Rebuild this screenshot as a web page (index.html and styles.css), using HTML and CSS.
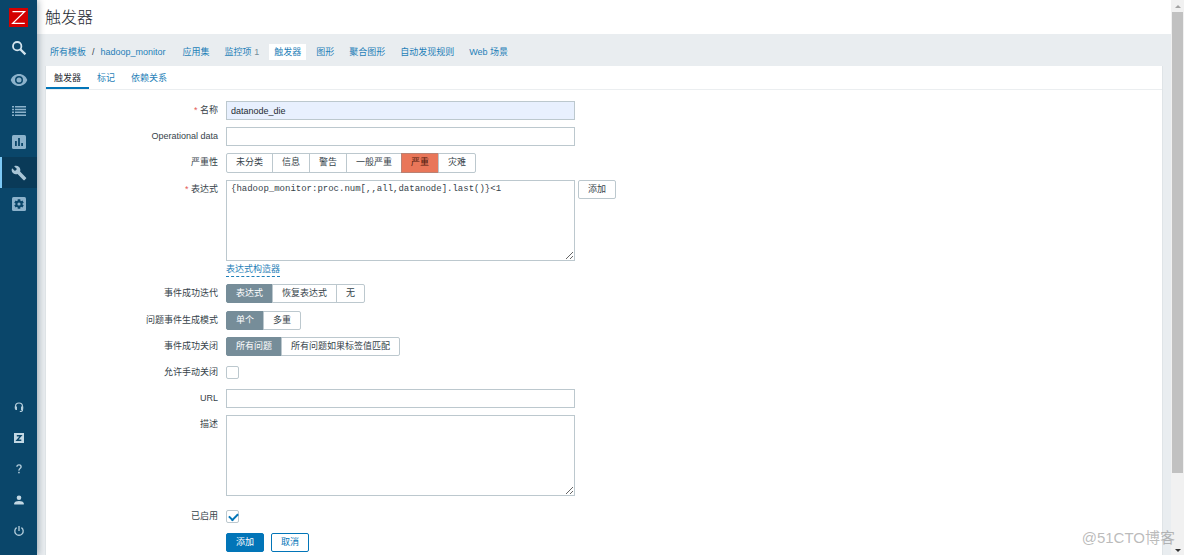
FILE: index.html
```html
<!DOCTYPE html>
<html lang="zh-CN">
<head>
<meta charset="utf-8">
<title>触发器</title>
<link rel="stylesheet" href="styles.css">
</head>
<body>
<div class="app">
  <aside class="sidebar">
    <a class="logo" href="#" aria-label="Zabbix"><svg viewBox="0 0 19 19" width="19" height="19"><rect width="19" height="19" fill="#d40000"/><path d="M3.5 3.6H15.5L3.7 15.4H15.8" fill="none" stroke="#fff" stroke-width="1.3"/></svg></a>
    <a class="item search" href="#" aria-label="搜索"><svg viewBox="0 0 16 16" width="16" height="16" fill="none" stroke="#d3e4ee"><circle cx="6.2" cy="6.2" r="4.2" stroke-width="1.8"/><path d="M9.4 9.4L14.4 14.4" stroke-width="2.2"/></svg></a>
    <nav class="menu">
      <a class="item" href="#" aria-label="监测"><svg viewBox="0 0 18 14" width="18" height="14" fill="#8cb2cb"><path fill-rule="evenodd" d="M9 1C5 1 2 3.500 .7 7 2 10.500 5 13 9 13s7-2.500 8.300-6C16 3.500 13 1 9 1zM9 11a4 4 0 1 1 0-8 4 4 0 0 1 0 8z"/><circle cx="9" cy="7" r="2.500"/></svg></a>
      <a class="item" href="#" aria-label="资产记录"><svg viewBox="0 0 16 12" width="16" height="12" fill="#8cb2cb"><path d="M1 1h2v1.500H1zM4 1h11v1.500H4zM1 3.800h2v1.500H1zM4 3.800h11v1.500H4zM1 6.600h2v1.500H1zM4 6.600h11v1.500H4zM1 9.400h2v1.500H1zM4 9.400h11v1.500H4z"/></svg></a>
      <a class="item" href="#" aria-label="报表"><svg viewBox="0 0 14 14" width="14" height="14"><rect width="14" height="14" rx="1.500" fill="#8cb2cb"/><path d="M3 6h1.800v5H3zM6.100 3h1.800v8H6.100zM9.200 8H11v3H9.200z" fill="#0a466a"/></svg></a>
      <a class="item active" href="#" aria-label="配置"><svg viewBox="0 0 24 24" width="16" height="16" fill="#a9c5d6"><path d="M22.700 19l-9.100-9.100c.9-2.300.4-5-1.500-6.900-2-2-5-2.400-7.400-1.300L9 6 6 9 1.600 4.700C.4 7.100.9 10.100 2.900 12.100c1.900 1.900 4.600 2.400 6.900 1.500l9.100 9.100c.4.400 1 .4 1.400 0l2.300-2.300c.5-.4.5-1.100.1-1.400z"/></svg></a>
      <a class="item" href="#" aria-label="管理"><svg viewBox="0 0 14 14" width="14" height="14"><rect width="14" height="14" rx="1.500" fill="#8cb2cb"/><g stroke="#0a466a" stroke-width="2.600"><path d="M7 2.200v9.600M2.900 4.600l8.200 4.800M2.900 9.400l8.200-4.800"/></g><circle cx="7" cy="7" r="3.400" fill="#0a466a"/><circle cx="7" cy="7" r="1.600" fill="#8cb2cb"/></svg></a>
    </nav>
    <nav class="menu bottom">
      <a class="item" href="#" aria-label="支持"><svg viewBox="0 0 12 12" width="12" height="12"><path d="M2.500 7V5.500a3.500 3.500 0 0 1 7 0V9q0 1.500-2.700 1.500" fill="none" stroke="#b5cedc" stroke-width="1.200"/><path d="M1.800 5.500H4V9H3Q1.800 8.800 1.800 7.500zM8 5.500h2.200v2Q10.200 9 9 9H8z" fill="#b5cedc"/></svg></a>
      <a class="item" href="#" aria-label="Share"><svg viewBox="0 0 10 10" width="10" height="10"><rect width="10" height="10" fill="#c3d8e4"/><path d="M2.800 2.700h4.200L3 7.300h4.300" fill="none" stroke="#0a466a" stroke-width="1.400"/></svg></a>
      <a class="item" href="#" aria-label="帮助"><svg viewBox="0 0 10 12" width="10" height="12"><path d="M2.900 3.800Q3 1.900 5 1.900t2.100 1.800Q7.100 4.700 6 5.500T5 7.600" fill="none" stroke="#b5cedc" stroke-width="1.400"/><rect x="4.200" y="8.800" width="1.500" height="1.500" fill="#b5cedc"/></svg></a>
      <a class="item" href="#" aria-label="用户"><svg viewBox="0 0 10 10" width="10" height="10" fill="#c3d8e4"><circle cx="5" cy="2.700" r="2.300"/><path d="M.2 9.500V8.300Q1 6 5 6t4.800 2.300v1.200z"/></svg></a>
      <a class="item" href="#" aria-label="退出"><svg viewBox="0 0 12 12" width="12" height="12" fill="none" stroke="#b5cedc" stroke-width="1.300"><path d="M6 1v5M3.600 2.600a4.200 4.200 0 1 0 4.800 0"/></svg></a>
    </nav>
  </aside>

  <main class="main">
    <header class="header"><h1>触发器</h1></header>
    <nav class="crumbs">
      <span class="path"><a href="#">所有模板</a><span class="sep">/</span><a href="#">hadoop_monitor</a></span>
      <a href="#">应用集</a>
      <span><a href="#">监控项</a> <span class="count">1</span></span>
      <a class="selected" href="#">触发器</a>
      <a href="#">图形</a>
      <a href="#">聚合图形</a>
      <a href="#">自动发现规则</a>
      <a href="#">Web 场景</a>
    </nav>
    <section class="panel">
      <nav class="tabs"><a class="current" href="#">触发器</a><a href="#">标记</a><a href="#">依赖关系</a></nav>
      <form class="form">
        <label class="name required" for="name">名称</label>
        <input class="text filled" id="name" type="text" value="datanode_die">

        <label class="name" for="opdata">Operational data</label>
        <input class="text" id="opdata" type="text">

        <span class="name" id="sev">严重性</span>
        <div class="segments severity" role="radiogroup" aria-labelledby="sev">
          <label><input type="radio" name="sev"><span>未分类</span></label>
          <label><input type="radio" name="sev"><span>信息</span></label>
          <label><input type="radio" name="sev"><span>警告</span></label>
          <label><input type="radio" name="sev"><span>一般严重</span></label>
          <label><input type="radio" name="sev" checked><span>严重</span></label>
          <label><input type="radio" name="sev"><span>灾难</span></label>
        </div>

        <label class="name required" for="expr">表达式</label>
        <div class="expression">
          <div class="pair">
            <textarea class="area mono" id="expr" spellcheck="false">{hadoop_monitor:proc.num[,,all,datanode].last()}&lt;1</textarea>
            <button class="button grey" type="button">添加</button>
          </div>
          <a class="builder" href="#">表达式构造器</a>
        </div>

        <span class="name" id="ok">事件成功迭代</span>
        <div class="segments roomy" role="radiogroup" aria-labelledby="ok">
          <label><input type="radio" name="ok" checked><span>表达式</span></label>
          <label><input type="radio" name="ok"><span>恢复表达式</span></label>
          <label><input type="radio" name="ok"><span>无</span></label>
        </div>

        <span class="name" id="mode">问题事件生成模式</span>
        <div class="segments" role="radiogroup" aria-labelledby="mode">
          <label><input type="radio" name="mode" checked><span>单个</span></label>
          <label><input type="radio" name="mode"><span>多重</span></label>
        </div>

        <span class="name" id="close">事件成功关闭</span>
        <div class="segments" role="radiogroup" aria-labelledby="close">
          <label><input type="radio" name="close" checked><span>所有问题</span></label>
          <label><input type="radio" name="close"><span>所有问题如果标签值匹配</span></label>
        </div>

        <label class="name" for="manual">允许手动关闭</label>
        <div class="check"><input id="manual" type="checkbox"></div>

        <label class="name" for="url">URL</label>
        <input class="text" id="url" type="text">

        <label class="name" for="desc">描述</label>
        <textarea class="area" id="desc"></textarea>

        <label class="name tall" for="enabled">已启用</label>
        <div class="check tall"><input id="enabled" type="checkbox" checked></div>

        <div class="actions">
          <button class="button primary" type="button">添加</button>
          <button class="button" type="button">取消</button>
        </div>
      </form>
    </section>
  </main>

  <div class="scrollbar" aria-hidden="true">
    <span class="arrow up"></span>
    <span class="thumb"></span>
    <span class="arrow down"></span>
  </div>
  <div class="watermark">@51CTO博客</div>
</div>
</body>
</html>
```

FILE: styles.css
```css
* { box-sizing: border-box; }

body {
  margin: 0;
  overflow: hidden;
  color: #36434a;
  background: #e9edf0;
  font: 9px/14px "Liberation Sans", "Noto Sans CJK SC", sans-serif;
}

a { color: #1f7fb8; text-decoration: none; }
svg { display: block; }
input, textarea, button { font: inherit; color: inherit; margin: 0; }

.app { position: relative; display: flex; height: 100vh; }

/* Sidebar */
.sidebar {
  z-index: 1;
  display: flex;
  flex-direction: column;
  flex: 0 0 37px;
  padding: 8px 0 9px;
  background: #0a466a;
  box-shadow: 1px 0 7px rgba(0, 30, 50, 0.35);
}
.logo { align-self: center; }
.item {
  display: flex;
  align-items: center;
  justify-content: center;
  height: 31px;
}
.search { margin: 5px 0 1px; }
.active { background: #0a3a58; box-shadow: inset 2px 0 #7cc8f5; }
.bottom { margin-top: auto; }

/* Page heading and navigation */
.main {
  display: flex;
  flex-direction: column;
  flex: 1;
  min-width: 0;
}
.header { flex: none; height: 34px; padding: 0 8px; background: #fff; }
h1 { margin: 0; color: #1f2c33; font-size: 16px; font-weight: 300; line-height: 36px; }
.crumbs {
  display: flex;
  align-items: center;
  flex: none;
  gap: 15px;
  height: 32px;
  padding: 3px 13px 0;
  white-space: nowrap;
}
.path { margin-right: 2px; }
.sep { margin: 0 6px; }
.count { color: #768d99; }
.selected { margin: 0 -5px; padding: 1px 5px; background: #fff; }

/* Panel */
.panel {
  flex: 1;
  margin: 0 8px;
  background: #fff;
  border: solid #dfe4e7;
  border-width: 0 1px;
}
.tabs { display: flex; height: 24px; border-bottom: 1px solid #ebeef0; }
.tabs a { padding: 5px 8px; }
.tabs .current { color: #1f2c33; box-shadow: inset 0 -2px #0275b8; }

.form {
  display: grid;
  grid-template-columns: 172px minmax(0, 1fr);
  gap: 7px 8px;
  padding: 11px 0;
}
.name { text-align: right; line-height: 19px; }
.required::before { content: "* "; color: #e45959; }
.text {
  width: 100%;
  max-width: 349px;
  height: 19px;
  padding: 0 4px;
  border: 1px solid #bcc8ce;
  background: #fff;
}
.filled { background: #e8f0fe; color: #1f2c33; }
.area {
  display: block;
  width: 100%;
  max-width: 349px;
  height: 81px;
  padding: 1px 4px;
  border: 1px solid #bcc8ce;
  background: #fff;
}
.mono { font-family: "Liberation Mono", monospace; }
.pair { display: flex; align-items: flex-start; gap: 3px; }
.builder {
  display: inline-block;
  margin-top: 2px;
  border-bottom: 1px dashed #1f7fb8;
  line-height: 13px;
}

.segments { display: flex; height: 19px; }
.severity { height: 20px; }
.roomy { margin-bottom: 1px; }
.segments label { position: relative; display: flex; margin-right: -1px; }
.segments input { position: absolute; opacity: 0; }
.segments span {
  padding: 0 9px;
  border: 1px solid #bcc8ce;
  line-height: 17px;
}
.segments label:first-child span { border-radius: 2px 0 0 2px; }
.segments label:last-child span { border-radius: 0 2px 2px 0; }
.segments input:checked + span { color: #fff; background: #768d99; border-color: #768d99; }
.severity input:checked + span { color: #4e1a0d; background: #e97659; border-color: #b98274; }

.check { display: flex; align-items: center; height: 19px; }
.tall { height: 23px; line-height: 26px; }
.check input {
  appearance: none;
  width: 13px;
  height: 13px;
  border: 1px solid #bcc8ce;
  border-radius: 2px;
}
.check.tall { padding-top: 3px; }
.check input:checked::before {
  content: "";
  display: block;
  width: 7px;
  height: 4px;
  margin: 3px 0 0 2px;
  border: solid #0275b8;
  border-width: 0 0 2px 2px;
  transform: translateY(-1px) rotate(-45deg);
}

.button {
  height: 19px;
  padding: 0 9px;
  border: 1px solid #0275b8;
  border-radius: 2px;
  background: #fff;
  color: #0275b8;
  line-height: 17px;
}
.grey { border-color: #bcc8ce; color: #36434a; }
.primary { background: #0275b8; color: #fff; }
.actions { grid-column: 2; display: flex; gap: 7px; }

/* Scrollbar */
.scrollbar {
  display: flex;
  flex-direction: column;
  align-items: center;
  flex: 0 0 13px;
  background: #f1f1f1;
}
.arrow { width: 0; border: 3px solid transparent; }
.up { margin: 2px 0 4px; border-bottom-color: #a3a3a3; }
.down { margin: auto 0 0; border-top-color: #333; }
.thumb { width: 11px; height: 83%; background: #c1c1c1; }

.watermark {
  position: absolute;
  right: 9px;
  bottom: 6px;
  z-index: 2;
  color: rgba(120, 120, 120, 0.5);
  font-size: 15px;
  line-height: 22px;
}
```
